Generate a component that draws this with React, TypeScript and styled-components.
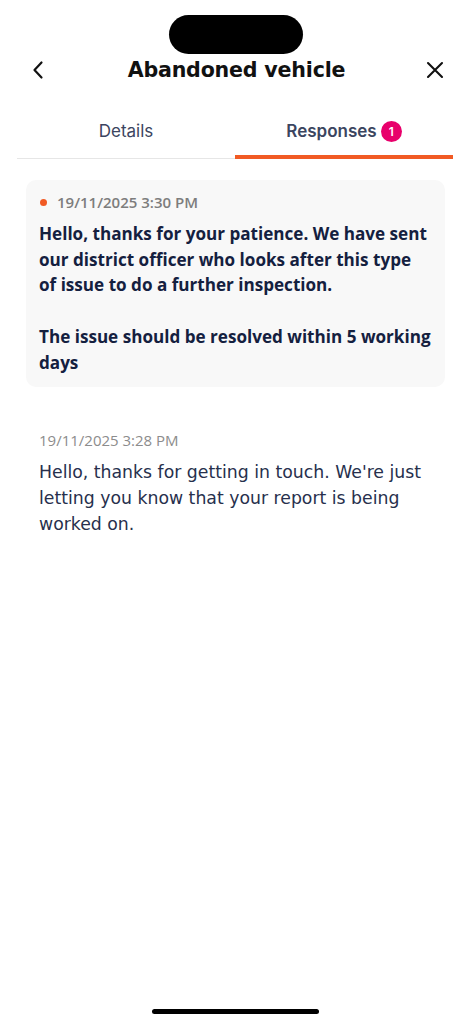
import React from "react";
import styled, { createGlobalStyle } from "styled-components";

const GlobalStyle = createGlobalStyle`
  html, body {
    margin: 0;
    padding: 0;
    background: #ffffff;
  }
  body {
    font-family: "DejaVu Sans", "Open Sans", sans-serif;
    -webkit-font-smoothing: antialiased;
  }
`;

const Screen = styled.div`
  width: 471px;
  height: 1024px;
  display: flex;
  flex-direction: column;
  background: #ffffff;
  overflow: hidden;
`;

const StatusArea = styled.div`
  height: 53px;
  display: flex;
  justify-content: center;
  padding-top: 15px;
  box-sizing: border-box;
`;

const Island = styled.div`
  width: 134px;
  height: 39px;
  border-radius: 20px;
  background: #000;
`;

const Header = styled.header`
  height: 34px;
  display: flex;
  align-items: center;
  justify-content: space-between;
  padding: 0 25px 0 27px;
  margin-bottom: 22px;
`;

const IconButton = styled.button`
  width: 22px;
  height: 22px;
  padding: 0;
  border: none;
  background: none;
  display: flex;
  align-items: center;
  justify-content: center;
  color: #111;
`;

const Title = styled.h1`
  margin: 0;
  font-size: 20.6px;
  font-weight: 700;
  color: #111;
  letter-spacing: -0.2px;
`;

const Tabs = styled.nav`
  margin: 0 18px 0 17px;
  display: grid;
  grid-template-columns: 1fr 1fr;
  border-bottom: 1px solid #e6e6e6;
`;

const Tab = styled.div<{ $active?: boolean }>`
  height: 50px;
  display: flex;
  align-items: center;
  justify-content: center;
  gap: 4px;
  padding-bottom: 6px;
  font-family: "Inter", sans-serif;
  font-size: 17px;
  font-weight: ${(p) => (p.$active ? 600 : 400)};
  color: #3b4560;
  box-shadow: ${(p) => (p.$active ? "inset 0 -4px 0 #f15a24" : "none")};
  margin-bottom: -1px;
  box-sizing: border-box;
`;

const Badge = styled.span`
  width: 21px;
  height: 21px;
  border-radius: 50%;
  background: #e8006b;
  color: #fff;
  font-size: 12px;
  font-weight: 600;
  display: flex;
  align-items: center;
  justify-content: center;
`;

const Feed = styled.section`
  padding: 21px 26px 0 26px;
  display: flex;
  flex-direction: column;
  gap: 31px;
`;

const Message = styled.article<{ $unread?: boolean }>`
  background: ${(p) => (p.$unread ? "#f8f8f8" : "transparent")};
  border-radius: 10px;
  padding: 12px 13px 12px 13px;
`;

const Meta = styled.div<{ $unread?: boolean }>`
  display: flex;
  align-items: center;
  gap: 10px;
  font-family: "Open Sans", sans-serif;
  font-size: 15px;
  font-weight: ${(p) => (p.$unread ? 600 : 400)};
  color: ${(p) => (p.$unread ? "#7d7d7d" : "#8c8c8c")};
  margin-bottom: 9px;
  height: 20px;
`;

const Dot = styled.span`
  width: 7px;
  height: 7px;
  border-radius: 50%;
  background: #f15a24;
  margin-left: 1px;
`;

const Body = styled.p<{ $unread?: boolean }>`
  margin: 0;
  font-family: ${(p) => (p.$unread ? '"Open Sans", sans-serif' : '"DejaVu Sans", sans-serif')};
  font-size: ${(p) => (p.$unread ? "17.1px" : "17.3px")};
  line-height: ${(p) => (p.$unread ? "25.7px" : "26px")};
  font-weight: ${(p) => (p.$unread ? 700 : 400)};
  color: ${(p) => (p.$unread ? "#14203f" : "#27304d")};
  white-space: pre-line;
`;

const Spacer = styled.div`
  flex: 1;
`;

const HomeBar = styled.div`
  align-self: center;
  width: 167px;
  height: 5px;
  border-radius: 3px;
  background: #000;
  margin-bottom: 10px;
`;

const responses = [
  {
    id: 2,
    date: "19/11/2025 3:30 PM",
    unread: true,
    text:
      "Hello, thanks for your patience. We have sent our district officer who looks after this type of issue to do a further inspection.\n\nThe issue should be resolved within 5 working days",
  },
  {
    id: 1,
    date: "19/11/2025 3:28 PM",
    unread: false,
    text:
      "Hello, thanks for getting in touch. We're just letting you know that your report is being worked on.",
  },
];

const App = () => {
  return (
    <Screen>
      <GlobalStyle />
      <StatusArea>
        <Island />
      </StatusArea>
      <Header>
        <IconButton aria-label="Back">
          <svg width="14" height="20" viewBox="0 0 14 20" fill="none">
            <path d="M10.5 2.5 3.5 10l7 7.5" stroke="#111" strokeWidth="2.2" strokeLinecap="round" strokeLinejoin="round" />
          </svg>
        </IconButton>
        <Title>Abandoned vehicle</Title>
        <IconButton aria-label="Close">
          <svg width="18" height="18" viewBox="0 0 18 18" fill="none">
            <path d="M2 2l14 14M16 2 2 16" stroke="#111" strokeWidth="2.1" strokeLinecap="round" />
          </svg>
        </IconButton>
      </Header>
      <Tabs>
        <Tab>Details</Tab>
        <Tab $active>
          Responses <Badge>1</Badge>
        </Tab>
      </Tabs>
      <Feed>
        {responses.map((r) => (
          <Message key={r.id} $unread={r.unread}>
            <Meta $unread={r.unread}>
              {r.unread && <Dot />}
              {r.date}
            </Meta>
            <Body $unread={r.unread}>{r.text}</Body>
          </Message>
        ))}
      </Feed>
      <Spacer />
      <HomeBar />
    </Screen>
  );
};

export default App;
